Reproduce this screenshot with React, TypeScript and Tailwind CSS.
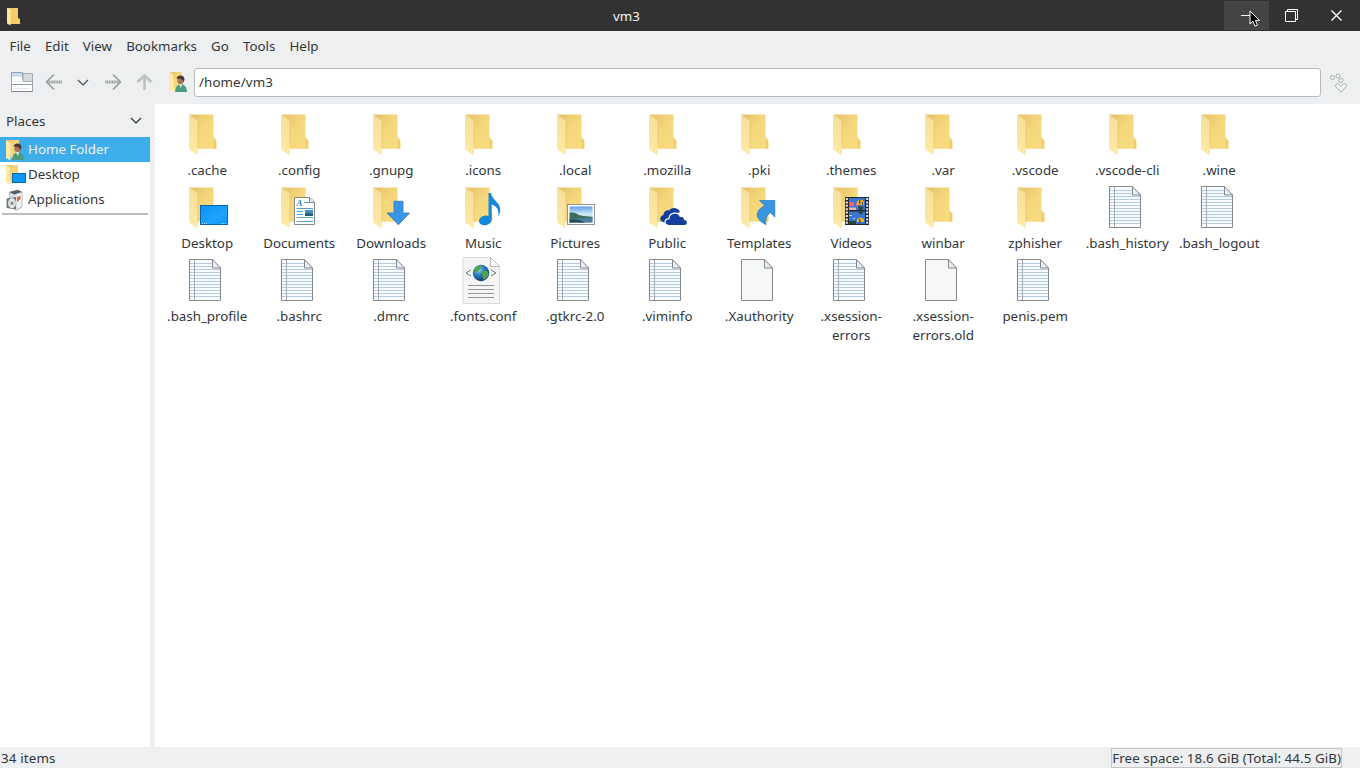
import type { ReactNode } from "react";

type Kind =
  | "folder"
  | "desktop"
  | "documents"
  | "downloads"
  | "music"
  | "pictures"
  | "public"
  | "templates"
  | "videos"
  | "text"
  | "blank"
  | "xml";

const files: { name: string; kind: Kind }[] = [
  { name: ".cache", kind: "folder" },
  { name: ".config", kind: "folder" },
  { name: ".gnupg", kind: "folder" },
  { name: ".icons", kind: "folder" },
  { name: ".local", kind: "folder" },
  { name: ".mozilla", kind: "folder" },
  { name: ".pki", kind: "folder" },
  { name: ".themes", kind: "folder" },
  { name: ".var", kind: "folder" },
  { name: ".vscode", kind: "folder" },
  { name: ".vscode-cli", kind: "folder" },
  { name: ".wine", kind: "folder" },
  { name: "Desktop", kind: "desktop" },
  { name: "Documents", kind: "documents" },
  { name: "Downloads", kind: "downloads" },
  { name: "Music", kind: "music" },
  { name: "Pictures", kind: "pictures" },
  { name: "Public", kind: "public" },
  { name: "Templates", kind: "templates" },
  { name: "Videos", kind: "videos" },
  { name: "winbar", kind: "folder" },
  { name: "zphisher", kind: "folder" },
  { name: ".bash_history", kind: "text" },
  { name: ".bash_logout", kind: "text" },
  { name: ".bash_profile", kind: "text" },
  { name: ".bashrc", kind: "text" },
  { name: ".dmrc", kind: "text" },
  { name: ".fonts.conf", kind: "xml" },
  { name: ".gtkrc-2.0", kind: "text" },
  { name: ".viminfo", kind: "text" },
  { name: ".Xauthority", kind: "blank" },
  { name: ".xsession-errors", kind: "text" },
  { name: ".xsession-errors.old", kind: "blank" },
  { name: "penis.pem", kind: "text" },
];

const menus = ["File", "Edit", "View", "Bookmarks", "Go", "Tools", "Help"];

function Gradients() {
  return (
    <svg className="absolute h-0 w-0" aria-hidden="true">
      <defs>
        <linearGradient id="back" x1="0" y1="0" x2="1" y2="1">
          <stop offset="0" stopColor="#e6c268" />
          <stop offset="0.45" stopColor="#f5d67b" />
          <stop offset="1" stopColor="#fbdd80" />
        </linearGradient>
        <linearGradient id="flap" x1="0" y1="0" x2="0" y2="1">
          <stop offset="0" stopColor="#f6df9c" />
          <stop offset="1" stopColor="#ffe9a2" />
        </linearGradient>
        <linearGradient id="screen" x1="0" y1="0" x2="1" y2="1">
          <stop offset="0" stopColor="#0a93f5" />
          <stop offset="0.6" stopColor="#1ca3fd" />
          <stop offset="1" stopColor="#0c98f8" />
        </linearGradient>
        <linearGradient id="sky" x1="0" y1="0" x2="0" y2="1">
          <stop offset="0" stopColor="#5f9fe8" />
          <stop offset="0.5" stopColor="#d5e9f8" />
          <stop offset="1" stopColor="#8ab4d6" />
        </linearGradient>
        <radialGradient id="globe" cx="0.35" cy="0.3" r="0.8">
          <stop offset="0" stopColor="#9bd8f5" />
          <stop offset="0.4" stopColor="#2b7fc4" />
          <stop offset="1" stopColor="#062a5c" />
        </radialGradient>
      </defs>
    </svg>
  );
}

function FolderShape() {
  return (
    <>
      <path d="M6.5 3.5H30.5V26.5L33.3 29.5V37.8H14L6.5 36Z" fill="url(#back)" />
      <path d="M30.5 26.5 33.3 29.5V37.8H30.5Z" fill="#efcc70" />
      <path d="M6.3 3.5 13.8 9C14.6 9.7 14.9 10.5 14.9 11.5V41L14.2 44.3 6.3 38.5Z" fill="url(#flap)" />
      <path d="M15 11V37.5" stroke="#e6c165" strokeWidth="0.6" />
    </>
  );
}

const overlays: Record<Kind, ReactNode> = {
  folder: null,
  text: null,
  blank: null,
  xml: null,
  desktop: (
    <>
      <rect x="17.5" y="21.5" width="27" height="19" fill="url(#screen)" stroke="#0b66ab" />
      <path d="M19 39.5H24M38 39.5H44" stroke="#a5dbff" strokeDasharray="1 1" />
    </>
  ),
  documents: (
    <>
      <path d="M19.5 13.5H35L39.5 18V40.5H19.5Z" fill="#fff" stroke="#84898e" />
      <path d="M34.5 13.5V18.5H39.5" fill="#e8eaec" stroke="#84898e" />
      <text x="21.8" y="21.8" fontSize="8.5" fontStyle="italic" fontWeight="bold" fill="#1684cc" fontFamily="Liberation Serif, serif">
        A
      </text>
      <path d="M29 18.5H34M21.5 24.5H38M21.5 27.5H28M21.5 30.5H28M21.5 33.5H38M21.5 37.5H38" stroke="#58a1d6" />
      <path d="M30 26H38V32H30Z" fill="#428bc5" />
      <path d="M30 32V30L33 29 38 30V32Z" fill="#285b70" />
    </>
  ),
  downloads: (
    <path d="M27 17.3H36V29H42.5L31.4 40.8 20 29H27Z" fill="#3995e6" stroke="#2879bf" strokeWidth="0.8" />
  ),
  music: (
    <path
      d="M29.5 9H32C33 16.5 41.5 18 41.3 26.5C41.2 29 40.3 31 39.3 32.3C40.5 25 36.5 21.5 32.7 20.5V35C32.7 38.8 29.5 41.3 25.5 41.3C22.3 41.3 20 39.5 20 37C20 33.8 23.5 31.4 27.2 31.4C28.2 31.4 29 31.6 29.5 31.9Z"
      fill="#1488db"
    />
  ),
  pictures: (
    <>
      <rect x="16.5" y="20.5" width="27" height="20" fill="#fff" stroke="#8f9499" />
      <rect x="18.5" y="22.5" width="23" height="16" fill="url(#sky)" />
      <path d="M18.5 29C22 28 25 29 28 31C32 32 37 32.5 41.5 33V35L18.5 36Z" fill="#3c6c5a" />
      <path d="M18.5 35 41.5 33.5V38.5H18.5Z" fill="#4d7d9d" />
      <path d="M18.5 36C25 35 29 36 34 38.5H18.5Z" fill="#244c54" />
    </>
  ),
  public: (
    <>
      <path
        d="M20 38C16.5 37.5 16 32 20.5 31C20.5 28 23.5 25.5 26 26.5C28 23 35.5 23 37 28L30 31 24 39Z"
        fill="#123f9d"
      />
      <path
        d="M26.5 41.5C20.5 41.5 20.8 35 26 34.6C26.2 28.3 35.2 27.2 37.2 32.4C40.3 31.9 41.5 33.6 41.5 35.4C45.6 36 45.5 41.5 41 41.5Z"
        fill="#123f9d"
        stroke="#fff"
        strokeWidth="1.2"
      />
    </>
  ),
  templates: (
    <path
      d="M24.5 16.5H39.8V33L35.3 28.6C31 31.8 30 36 31 40.7C25.5 38 20.5 33.5 22.8 28C24 25.2 27 22.8 29.8 21.8Z"
      fill="#3995e0"
      stroke="#277abd"
      strokeWidth="0.7"
    />
  ),
  videos: (
    <>
      <rect x="18" y="13" width="24" height="28" fill="#24282b" />
      <path d="M19.8 14V41M40.2 14V41" stroke="#f4f4f4" strokeWidth="2" strokeDasharray="2 1.4" />
      <rect x="22" y="14" width="16" height="12" fill="#3b75d3" />
      <rect x="22" y="27.5" width="16" height="12.5" fill="#3b75d3" />
      <path d="M22 18H27V22H23ZM29 19H31V22H29Z" fill="#e96a70" />
      <path d="M22 23.5H29V26H22Z" fill="#efb3ad" />
      <path d="M30 18C31 15 36 15 37 18V21H30ZM30 36C31 33 36 33 37 36V38H30Z" fill="#f0b727" />
      <path d="M32 16H33.5V20H32ZM35 18H36V21H35ZM32 35H33.5V40H32Z" fill="#6b4a2a" />
      <path d="M31 22 37 23 35 26H32ZM31 28H36L34 31ZM22 37H29V40H22Z" fill="#29472d" />
      <path d="M22 31H25V32H22ZM26 34H28V35H26Z" fill="#a3d5f5" />
    </>
  ),
};

function FileIcon({ kind }: { kind: Kind }) {
  if (kind === "text")
    return (
      <svg className="shrink-0" width="48" height="48" viewBox="-1 1 48 48">
        <path d="M5.5 3.5H28L36.5 12V44.5H5.5Z" fill="#f8fbfe" stroke="#85888c" />
        <path
          d="M6 7.5H28M6 10.5H28M6 13.5H36M6 16.5H36M6 19.5H36M6 22.5H36M6 25.5H36M6 28.5H36M6 31.5H36M6 34.5H36M6 37.5H36M6 40.5H36"
          stroke="#b3cbe3"
        />
        <path d="M10.5 4V44" stroke="#a8aab6" />
        <path d="M28.5 3.5V12H36.5Z" fill="#eceef0" stroke="#85888c" />
      </svg>
    );
  if (kind === "blank")
    return (
      <svg className="shrink-0" width="48" height="48" viewBox="-1 1 48 48">
        <path d="M5.5 3.5H28L36.5 12V44.5H5.5Z" fill="#f6f8f8" stroke="#85888c" />
        <path d="M28.5 3.5V12H36.5Z" fill="#eceef0" stroke="#85888c" />
      </svg>
    );
  if (kind === "xml")
    return (
      <svg className="shrink-0" width="48" height="48" viewBox="0 0 48 48">
        <path d="M4 0.5H31.5L40.5 9.5V46.5H4Z" fill="#f5f5f6" stroke="#d9dadb" />
        <path d="M31.5 0.5V9.5H40.5Z" fill="#fff" stroke="#b8b9bc" />
        <circle cx="22" cy="16" r="8.2" fill="url(#globe)" />
        <path d="M16 11.5C18 8 21 8.5 23 9L20 13.5 17 15.5 14.5 13.5ZM23 14.5C26 12.5 29 13.5 29.5 16.5C29 20.5 26 22.5 24 22.5Z" fill="#4da44b" />
        <path d="M12 13 7 16 12 19M32 13 37 16 32 19" fill="none" stroke="#74777a" strokeWidth="1" />
        <path d="M9 28.5H35M9 32.5H35M9 36.5H35M9 40.5H35" stroke="#96969f" strokeWidth="1.2" />
      </svg>
    );
  return (
    <svg className="shrink-0" width="48" height="48" viewBox="0 0 48 48">
      <FolderShape />
      {overlays[kind]}
    </svg>
  );
}

function HomeIcon() {
  return (
    <svg className="shrink-0" width="20" height="22" viewBox="0 0 20 22">
      <path d="M1 1H13V19H5Z" fill="url(#back)" />
      <path d="M0 1 4.5 4V21.5L0 19Z" fill="#ffe9a9" />
      <path d="M6 21C6.5 16 8 13.5 12 13C16 13.5 18 17 18 21Z" fill="#4d9a83" />
      <path d="M9.5 13 12 17 13.5 12.5Z" fill="#d4e6de" />
      <ellipse cx="11.5" cy="9" rx="3.3" ry="4.2" fill="#ad7557" />
      <path d="M7.5 7.5C8 3.3 15.8 3.3 15.5 8.5L14.7 11.5C14.2 8.5 12.7 7.5 7.5 7.5Z" fill="#453b35" />
    </svg>
  );
}

function SmallDesktopIcon() {
  return (
    <svg className="shrink-0" width="20" height="22" viewBox="0 0 20 22">
      <path d="M0 1H12V18H0Z" fill="url(#back)" />
      <path d="M0 1 4 3.5V21L0 18.5Z" fill="#ffe9a9" />
      <rect x="6.5" y="9.5" width="13" height="9" fill="#0c98f8" stroke="#0b66ab" />
    </svg>
  );
}

function ApplicationsIcon() {
  return (
    <svg className="shrink-0" width="20" height="22" viewBox="0 0 20 22">
      <path d="M3.5 3 12 1 16 3V18L11 21 3.5 18Z" fill="#dce1e3" stroke="#9ba5a9" strokeWidth="0.7" />
      <path d="M3.5 3 12 1 16 3 8 5.5Z" fill="#4d6069" />
      <path d="M11 5 15.5 4V17L11 20Z" fill="#edf0ef" />
      <path d="M11 8 14.5 7V10L11 13Z" fill="#e4663d" />
      <path d="M0.5 9.5 10 8V20.5L0.5 19Z" fill="#737a7c" />
      <ellipse cx="6" cy="14.2" rx="4" ry="5" fill="#dde0e0" />
      <ellipse cx="6" cy="14.2" rx="1.3" ry="1.6" fill="#747d80" />
      <path d="M6 9.5V12.5M6 16V19" stroke="#fff" />
    </svg>
  );
}

const places = [
  { label: "Home Folder", icon: <HomeIcon />, active: true },
  { label: "Desktop", icon: <SmallDesktopIcon />, active: false },
  { label: "Applications", icon: <ApplicationsIcon />, active: false },
];

function TitleBar() {
  return (
    <header className="relative flex h-[31px] shrink-0 items-center bg-[#323232] text-white">
      <svg className="ml-[6px]" width="16" height="20" viewBox="0 0 16 20">
        <path d="M1 2H12V12L14 13V18H4Z" fill="#f2cd68" />
        <path d="M1 2 4.5 4V19.5L1 17.5Z" fill="#ffe7a0" />
      </svg>
      <span className="flex-1 pt-px pr-[106px] pl-[113px] text-center text-[#f4f4f4]">vm3</span>
      <div className="flex h-full items-center">
        <div className="flex h-[29px] w-[45px] items-center justify-center bg-[#444444]">
          <svg width="15" height="15" viewBox="0 0 15 15">
            <path d="M2 7.5H13" stroke="#fff" />
          </svg>
        </div>
        <div className="flex h-full w-[45px] items-center justify-center">
          <svg width="15" height="15" viewBox="0 0 15 15" fill="none" stroke="#fff">
            <path d="M1.5 3.5H11.5V13.5H1.5ZM3.5 3.5V1.5H13.5V11.5H11.5" />
          </svg>
        </div>
        <div className="flex h-full w-[46px] items-center justify-center pr-[2px]">
          <svg width="15" height="15" viewBox="0 0 15 15">
            <path d="M2.5 2.5 12.5 12.5M12.5 2.5 2.5 12.5" stroke="#fff" strokeWidth="1.4" />
          </svg>
        </div>
      </div>
      <svg className="absolute top-[10px] left-[1249px]" width="12" height="18" viewBox="0 0 12 18">
        <path d="M1 1V14L4 11.2 6 16.2 8.5 15.1 6.4 10.4H10.5Z" fill="#000" stroke="#fff" />
      </svg>
    </header>
  );
}

function Toolbar() {
  return (
    <div className="flex h-[42px] shrink-0 items-center pb-[2px]">
      <svg className="ml-[11px]" width="22" height="22" viewBox="0 0 22 22">
        <path d="M0.5 1.5H11.5V9H21.5V20.5H0.5Z" fill="#fdfdfe" stroke="#9aa0a8" />
        <path d="M12 2.5H21.5V10.5H12Z" fill="#d4dadf" stroke="#a5adb4" />
        <path d="M1 2H11V5.5H1Z" fill="#c6daf2" />
        <path d="M1 13.5H21" stroke="#8e9bb0" />
        <path d="M3 10.5H10M3 17.5H18" stroke="#e4e6ec" />
        <path d="M0.5 20.5H21.5" stroke="#808489" />
      </svg>
      <svg className="ml-3" width="18" height="18" viewBox="0 0 18 18" fill="none" stroke="#9b9f9f">
        <path d="M9 1.5 1.5 9 9 16.5" strokeWidth="1.7" />
        <path d="M2 9H17" strokeWidth="2.8" strokeDasharray="1.2 0.5" />
      </svg>
      <svg className="ml-[14px]" width="12" height="12" viewBox="0 0 12 12" fill="none" stroke="#43474a">
        <path d="M1 4 6 9 11 4" strokeWidth="1.2" />
      </svg>
      <svg className="ml-[15px]" width="18" height="18" viewBox="0 0 18 18" fill="none" stroke="#9b9f9f">
        <path d="M9 1.5 16.5 9 9 16.5" strokeWidth="1.7" />
        <path d="M16 9H1" strokeWidth="2.8" strokeDasharray="1.2 0.5" />
      </svg>
      <svg className="ml-[14px]" width="17" height="18" viewBox="0 0 17 18" fill="none" stroke="#bec1c2">
        <path d="M1.5 9 8.5 2.5 15.5 9M8.5 3V17" strokeWidth="2.6" />
      </svg>
      <div className="ml-4">
        <HomeIcon />
      </div>
      <div className="ml-[5px] flex h-[29px] w-[1127px] items-center rounded-[3px] border border-[#b9bcbe] bg-white pt-px pl-1 tracking-[0.1px]">
        /home/vm3
      </div>
      <svg className="mt-[3px] ml-[8px]" width="21" height="21" viewBox="0 0 21 21" fill="#f8faf8" stroke="#a5aca5">
        <circle cx="3.5" cy="4.5" r="2" />
        <circle cx="9" cy="3" r="2" />
        <circle cx="12" cy="7.5" r="2" />
        <path d="M6 12.5 9 10.5 12 13.5 15 10.5 18 12.5 12 19Z" />
      </svg>
    </div>
  );
}

export default function App() {
  return (
    <div className="flex h-screen w-full flex-col overflow-hidden bg-[#eeeff0] font-['Noto_Sans',sans-serif] text-[13.333px] leading-[19px] text-[#31363b]">
      <Gradients />
      <TitleBar />
      <nav className="flex h-[31px] shrink-0 items-center gap-[14.1px] pl-[9.5px]">
        {menus.map((menu) => (
          <span key={menu}>{menu}</span>
        ))}
      </nav>
      <Toolbar />

      <div className="flex min-h-0 flex-1">
        {/* Places */}
        <aside className="flex w-[150px] shrink-0 flex-col bg-white">
          <div className="flex h-[33px] items-center justify-between bg-[#eeeff0] pt-px pr-2 pl-[6px]">
            <span>Places</span>
            <svg width="12" height="12" viewBox="0 0 12 12" fill="none" stroke="#232629">
              <path d="M1 3 6 8 11 3" strokeWidth="1.1" />
            </svg>
          </div>
          {places.map((place) => (
            <div
              key={place.label}
              className={
                place.active
                  ? "flex h-[25px] items-center gap-[2px] bg-[#3daee9] pl-[6px] text-[#eff0f1]"
                  : "flex h-[25px] items-center gap-[2px] pl-[6px]"
              }
            >
              {place.icon}
              <span>{place.label}</span>
            </div>
          ))}
          <div className="mx-[2px] mt-px h-[2px] bg-[#bcbebf]" />
        </aside>
        <div className="w-[5px] shrink-0" />

        {/* Icon view */}
        <main className="flex-1 bg-white pt-[7px] pl-[6px]">
          <div className="grid auto-rows-[73px] grid-cols-[repeat(12,92px)]">
            {files.map((file) => (
              <div key={file.name} className="flex flex-col items-center">
                <FileIcon kind={file.kind} />
                <span className="mt-[2px] w-[88px] pl-[0.4px] text-center">{file.name}</span>
              </div>
            ))}
          </div>
        </main>
      </div>

      <footer className="flex h-[21px] shrink-0 items-center justify-between pr-[18px] pl-px">
        <span className="pt-[2px] tracking-[0.15px]">34 items</span>
        <span className="flex h-[20px] items-center border border-[#c3c5c6] pt-[2px] tracking-[0.075px]">
          Free space: 18.6 GiB (Total: 44.5 GiB)
        </span>
      </footer>
    </div>
  );
}
